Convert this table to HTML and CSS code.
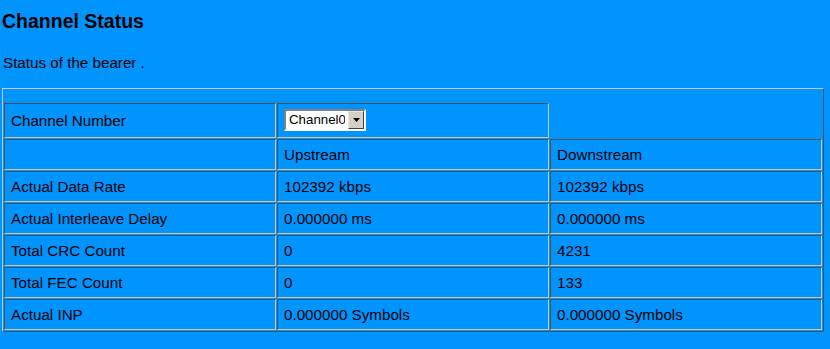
FILE: index.html
```html
<!DOCTYPE html>
<html>
<head>
<meta charset="utf-8">
<title>Channel Status</title>
<link rel="stylesheet" href="styles.css">
</head>
<body>
<h1 class="title">Channel Status</h1>
<p class="intro">Status of the bearer .</p>
<table class="status">
  <tr class="spacer"><td colspan="3"></td></tr>
  <tr class="sel-row">
    <td class="cell">Channel Number</td>
    <td class="cell">
      <span class="select">
        <select class="select-input"><option>Channel0</option></select>
        <span class="select-btn"><svg width="9" height="6" viewBox="0 0 9 6"><path d="M1 1h7L4.5 5z" fill="#000"/></svg></span>
      </span>
    </td>
    <td class="blank"></td>
  </tr>
  <tr><td class="cell"></td><td class="cell">Upstream</td><td class="cell">Downstream</td></tr>
  <tr><td class="cell">Actual Data Rate</td><td class="cell">102392 kbps</td><td class="cell">102392 kbps</td></tr>
  <tr><td class="cell">Actual Interleave Delay</td><td class="cell">0.000000 ms</td><td class="cell">0.000000 ms</td></tr>
  <tr><td class="cell">Total CRC Count</td><td class="cell">0</td><td class="cell">4231</td></tr>
  <tr><td class="cell">Total FEC Count</td><td class="cell">0</td><td class="cell">133</td></tr>
  <tr><td class="cell">Actual INP</td><td class="cell">0.000000 Symbols</td><td class="cell">0.000000 Symbols</td></tr>
</table>
</body>
</html>
```
FILE: styles.css
```css
html, body {
  margin: 0;
  background: #0094ff;
}
body {
  padding: 0 2px;
  font-family: "Liberation Sans", Arial, sans-serif;
  color: #000;
}
.title {
  margin: 10px 0 0 0;
  font-size: 19.5px;
  line-height: 23px;
  font-weight: bold;
}
.intro {
  margin: 21px 0 0 1px;
  font-size: 15.2px;
  line-height: 18px;
}
.status {
  margin-top: 16px;
  width: 822px;
  table-layout: fixed;
  border-collapse: separate;
  border-spacing: 1px;
  border: 1px solid;
  border-color: #c8c8c8 #505050 #505050 #c8c8c8;
  font-size: 15.2px;
}
.spacer td {
  height: 12px;
  padding: 0;
  border: none;
}
.cell {
  width: 33.33%;
  border: 1px solid;
  border-color: #505050 #c8c8c8 #c8c8c8 #505050;
  padding: 6px 6px 6px 6px;
  line-height: 17px;
  vertical-align: middle;
  white-space: nowrap;
}
.blank {
  padding: 0;
  border: none;
}
.sel-row .cell {
  padding-top: 6px;
  padding-bottom: 6px;
}
.select {
  display: inline-flex;
  vertical-align: top;
  margin-top: -1px;
  height: 22px;
  box-sizing: border-box;
  border: 2px solid;
  border-color: #808080 #ffffff #ffffff #808080;
  background: #fff;
}
.select-input {
  appearance: none;
  -webkit-appearance: none;
  border: none;
  outline: none;
  background: #fff;
  margin: 0;
  padding: 0 3px 0 3px;
  font-family: "Liberation Sans", Arial, sans-serif;
  font-size: 13.3px;
  line-height: 18px;
  height: 18px;
  width: 62px;
  color: #000;
}
.select-btn {
  width: 16px;
  height: 18px;
  box-sizing: border-box;
  border: 1px solid;
  border-color: #e8e6e0 #404040 #404040 #e8e6e0;
  background: #d4d0c8;
  display: flex;
  align-items: center;
  justify-content: center;
}
```
